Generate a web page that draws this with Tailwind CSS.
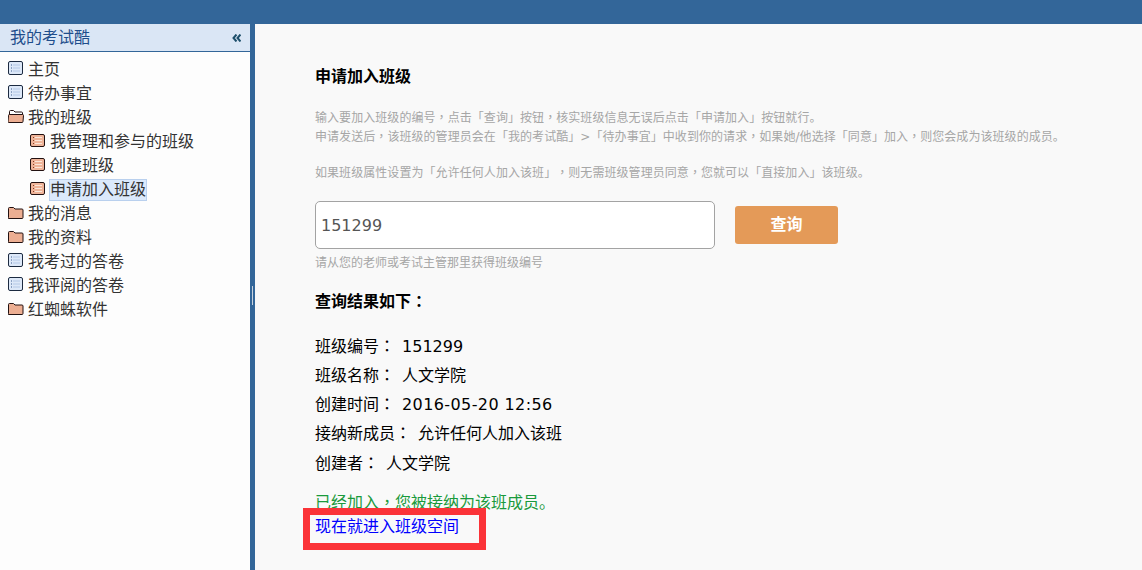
<!DOCTYPE html>
<html lang="zh">
<head>
<meta charset="utf-8">
<title>申请加入班级</title>
<script src="https://cdn.jsdelivr.net/npm/@tailwindcss/browser@4"></script>
</head>
<body class="h-[570px] overflow-hidden bg-[#f9f9f9] font-['DejaVu_Sans','Noto_Sans_CJK_SC',sans-serif] text-black [text-spacing-trim:space-all]">
<svg width="0" height="0" class="absolute">
  <defs>
    <symbol id="page" viewBox="0 0 16 16">
      <rect x="0.500" y="0.500" width="14" height="13" rx="1.500" fill="#dde8f8" stroke="#1c2a40"/>
      <path d="M3 4h1M3 7h1M3 10h1" stroke="#3f5f90"/>
      <path d="M5 4h7M5 7h7M5 10h7" stroke="#b4c8e6"/>
    </symbol>
    <symbol id="folder" viewBox="0 0 16 16">
      <path d="M0.500 12.500V3.500q0-1 1-1h4l1.500 1.500h7q1 0 1 1v7.500q0 1-1 1h-13.500q-1 0-1-1z" fill="#ecae92" stroke="#211"/>
    </symbol>
    <symbol id="folder-open" viewBox="0 0 16 16">
      <path d="M1.500 6V2.500q0-1 1-1h3l1.500 1.500h6.500q1 0 1 1v2z" fill="#fff" stroke="#211"/>
      <path d="M0.500 6.500q0-1 1-1h13q1 0 1 1l-.5 6q0 1-1 1h-13q-1 0-1-1z" fill="#ecae92" stroke="#211"/>
    </symbol>
    <symbol id="doc" viewBox="0 0 16 16">
      <rect x="0.500" y="1.500" width="14" height="12" rx="1.500" fill="#efb499" stroke="#211"/>
      <path d="M3 4.500h1M3 7.500h1M3 10.500h1" stroke="#8a3d1f"/>
      <path d="M5 4.500h7M5 7.500h7M5 10.500h7" stroke="#fbe6d8"/>
    </symbol>
  </defs>
</svg>

<header class="h-6 bg-[#336699]"></header>

<div class="flex h-[546px]">
  <aside class="w-[250px] shrink-0 bg-[#fdfdfd]">
    <div class="flex h-[28px] items-center justify-between border-b border-[#336699] bg-[#dae6f5] pl-[10px] pr-[9px]">
      <span class="pt-px text-[16px] text-[#1f4e8c]">我的考试酷</span>
      <svg width="9" height="8" viewBox="0 0 9 8" fill="none" stroke="#1d4f6b" stroke-width="2"><path d="M4.500 0.500L1.500 4l3 3.500M8.500 0.500L5.500 4l3 3.500"/></svg>
    </div>
    <ul class="pt-[6px] text-[16px] text-[#333]">
      <li class="flex h-6 items-center gap-1 pl-2"><svg class="size-4 -translate-y-px"><use href="#page"/></svg>主页</li>
      <li class="flex h-6 items-center gap-1 pl-2"><svg class="size-4 -translate-y-px"><use href="#page"/></svg>待办事宜</li>
      <li class="flex h-6 items-center gap-1 pl-2"><svg class="size-4 -translate-y-px"><use href="#folder-open"/></svg>我的班级</li>
      <li class="flex h-6 items-center gap-1 pl-[30px]"><svg class="size-4 -translate-y-px"><use href="#doc"/></svg>我管理和参与的班级</li>
      <li class="flex h-6 items-center gap-1 pl-[30px]"><svg class="size-4 -translate-y-px"><use href="#doc"/></svg>创建班级</li>
      <li class="flex h-6 items-center gap-1 pl-[30px]"><svg class="size-4 -translate-y-px"><use href="#doc"/></svg><span class="-ml-px border border-[#b9d0ee] bg-[#dbe9fb] leading-[20px]">申请加入班级</span></li>
      <li class="flex h-6 items-center gap-1 pl-2"><svg class="size-4 -translate-y-px"><use href="#folder"/></svg>我的消息</li>
      <li class="flex h-6 items-center gap-1 pl-2"><svg class="size-4 -translate-y-px"><use href="#folder"/></svg>我的资料</li>
      <li class="flex h-6 items-center gap-1 pl-2"><svg class="size-4 -translate-y-px"><use href="#page"/></svg>我考过的答卷</li>
      <li class="flex h-6 items-center gap-1 pl-2"><svg class="size-4 -translate-y-px"><use href="#page"/></svg>我评阅的答卷</li>
      <li class="flex h-6 items-center gap-1 pl-2"><svg class="size-4 -translate-y-px"><use href="#folder"/></svg>红蜘蛛软件</li>
    </ul>
  </aside>

  <div class="flex w-[5px] shrink-0 items-center justify-center bg-[#336699]">
    <div class="mb-[4px] h-[19px] w-px bg-[#c9d3de]"></div>
  </div>

  <main class="relative flex-1 pl-[60px]">
    <h1 class="mt-[41px] text-[16px] font-bold leading-6">申请加入班级</h1>
    <div class="mt-[20px] text-[12px] leading-[18.5px] tracking-[0.06px] text-[#a6a6a6]">
      <p>输入要加入班级的编号<span lang="zh-TW" class="font-['Noto_Sans_CJK_TC'] leading-none">，</span>点击「查询」按钮<span lang="zh-TW" class="font-['Noto_Sans_CJK_TC'] leading-none">，</span>核实班级信息无误后点击「申请加入」按钮就行。</p>
      <p>申请发送后<span lang="zh-TW" class="font-['Noto_Sans_CJK_TC'] leading-none">，</span>该班级的管理员会在「我的考试酷」&gt;「待办事宜」中收到你的请求<span lang="zh-TW" class="font-['Noto_Sans_CJK_TC'] leading-none">，</span>如果她/他选择「同意」加入<span lang="zh-TW" class="font-['Noto_Sans_CJK_TC'] leading-none">，</span>则您会成为该班级的成员。</p>
      <p class="mt-[18px]">如果班级属性设置为「允许任何人加入该班」<span lang="zh-TW" class="font-['Noto_Sans_CJK_TC'] leading-none">，</span>则无需班级管理员同意<span lang="zh-TW" class="font-['Noto_Sans_CJK_TC'] leading-none">，</span>您就可以「直接加入」该班级。</p>
    </div>

    <div class="mt-[18px] flex items-center gap-5">
      <input value="151299" class="h-[48px] w-[400px] rounded-[5px] border border-[#a3a3a3] bg-white px-[5px] pt-[2px] text-[16px] text-[#555]">
      <button class="h-[38px] w-[103px] rounded-[3px] bg-[#e49a58] text-[16px] font-bold text-white">查询</button>
    </div>
    <p class="mt-[5px] text-[12px] leading-[18px] text-[#a6a6a6]">请从您的老师或考试主管那里获得班级编号</p>

    <h2 class="mt-[18px] text-[16px] font-bold leading-6">查询结果如下<span lang="zh-TW" class="font-['Noto_Sans_CJK_TC'] leading-none">：</span></h2>

    <dl class="mt-[18px] text-[16px] leading-[29px]">
      <div class="flex gap-[7px]"><dt>班级编号<span lang="zh-TW" class="font-['Noto_Sans_CJK_TC'] leading-none">：</span></dt><dd>151299</dd></div>
      <div class="flex gap-[7px]"><dt>班级名称<span lang="zh-TW" class="font-['Noto_Sans_CJK_TC'] leading-none">：</span></dt><dd>人文学院</dd></div>
      <div class="flex gap-[7px]"><dt>创建时间<span lang="zh-TW" class="font-['Noto_Sans_CJK_TC'] leading-none">：</span></dt><dd class="tracking-[0.4px]">2016-05-20 12:56</dd></div>
      <div class="flex gap-[7px]"><dt>接纳新成员<span lang="zh-TW" class="font-['Noto_Sans_CJK_TC'] leading-none">：</span></dt><dd>允许任何人加入该班</dd></div>
      <div class="mt-px flex gap-[7px]"><dt>创建者<span lang="zh-TW" class="font-['Noto_Sans_CJK_TC'] leading-none">：</span></dt><dd>人文学院</dd></div>
    </dl>

    <p class="mt-[13px] text-[16px] leading-6 text-[#1a9a3c]">已经加入<span lang="zh-TW" class="font-['Noto_Sans_CJK_TC'] leading-none">，</span>您被接纳为该班成员。</p>
    <a href="#" class="block text-[16px] leading-6 text-[#0000ff]">现在就进入班级空间</a>

    <div class="absolute left-[48px] top-[484px] h-[42px] w-[183px] border-[7px] border-[#fb3338]"></div>
  </main>
</div>
</body>
</html>
